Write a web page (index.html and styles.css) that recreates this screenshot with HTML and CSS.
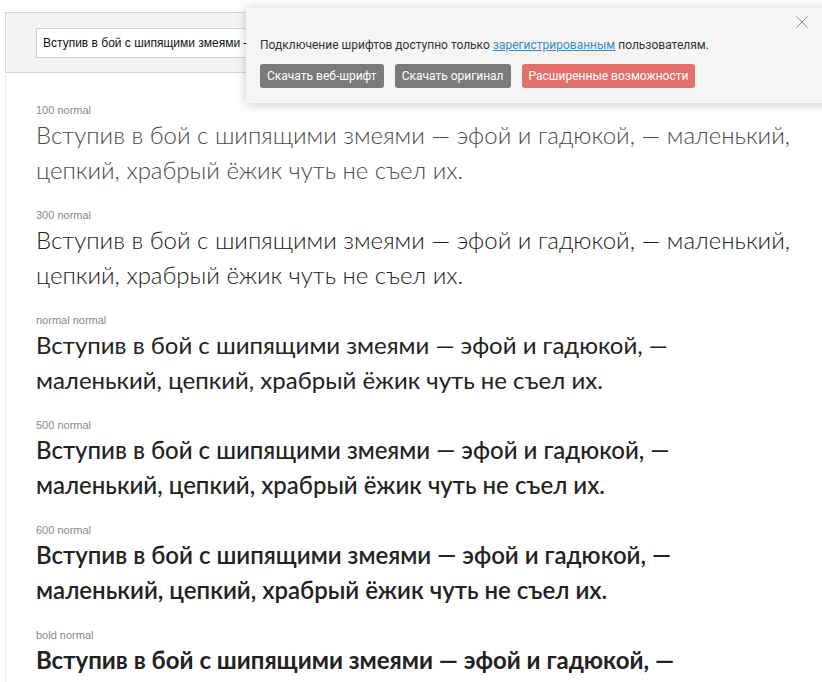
FILE: index.html
```html
<!DOCTYPE html>
<html lang="ru">
<head>
<meta charset="utf-8">
<title>Шрифт</title>
<link rel="stylesheet" href="styles.css">
</head>
<body>
<div class="page">
  <div class="toolbar">
    <div class="sample-input">Вступив в бой с шипящими змеями — эфой и гадюкой, — маленький, цепкий</div>
  </div>
  <div class="content">
    <section class="style">
      <div class="label">100 normal</div>
      <p class="sample w100">Вступив в бой с шипящими змеями — эфой и гадюкой, — маленький, цепкий, храбрый ёжик чуть не съел их.</p>
    </section>
    <section class="style">
      <div class="label">300 normal</div>
      <p class="sample w300">Вступив в бой с шипящими змеями — эфой и гадюкой, — маленький, цепкий, храбрый ёжик чуть не съел их.</p>
    </section>
    <section class="style">
      <div class="label">normal normal</div>
      <p class="sample w400">Вступив в бой с шипящими змеями — эфой и гадюкой, — маленький, цепкий, храбрый ёжик чуть не съел их.</p>
    </section>
    <section class="style">
      <div class="label">500 normal</div>
      <p class="sample w500">Вступив в бой с шипящими змеями — эфой и гадюкой, — маленький, цепкий, храбрый ёжик чуть не съел их.</p>
    </section>
    <section class="style">
      <div class="label">600 normal</div>
      <p class="sample w600">Вступив в бой с шипящими змеями — эфой и гадюкой, — маленький, цепкий, храбрый ёжик чуть не съел их.</p>
    </section>
    <section class="style">
      <div class="label">bold normal</div>
      <p class="sample w700">Вступив в бой с шипящими змеями — эфой и гадюкой, — маленький, цепкий, храбрый ёжик чуть не съел их.</p>
    </section>
  </div>
</div>
<div class="popup">
  <button class="close" aria-label="Закрыть">
    <svg width="12" height="12" viewBox="0 0 12 12"><path d="M0.5 0.5 L11.5 11.5 M11.5 0.5 L0.5 11.5" stroke="#8a8a8a" stroke-width="1" fill="none"/></svg>
  </button>
  <p class="popup-text">Подключение шрифтов доступно только <a href="#">зарегистрированным</a> пользователям.</p>
  <div class="popup-actions">
    <button class="btn btn-grey">Скачать веб-шрифт</button>
    <button class="btn btn-grey">Скачать оригинал</button>
    <button class="btn btn-red">Расширенные возможности</button>
  </div>
</div>
</body>
</html>
```
FILE: styles.css
```css
html, body {
  margin: 0;
  padding: 0;
  background: #fff;
}
body {
  font-family: "Liberation Sans", Arial, sans-serif;
  color: #222;
  overflow: hidden;
  height: 682px;
}
.page {
  padding: 12px 0 0 5px;
}
.toolbar {
  background: #f4f4f4;
  border: 1px solid #d6d6d6;
  border-right: none;
  padding: 15px 0 0 30px;
  box-sizing: border-box;
  height: 61px;
}
.sample-input {
  width: 360px;
  height: 30px;
  box-sizing: border-box;
  background: #fff;
  border: 1px solid #cfcfcf;
  font-size: 12px;
  line-height: 28px;
  padding: 0 6px;
  white-space: nowrap;
  overflow: hidden;
  color: #111;
}
.content {
  border-left: 1px solid #ececec;
  padding: 30px 22px 0 30px;
}
.style {
  margin-bottom: 21px;
}
.label {
  font-family: "Liberation Sans", Arial, sans-serif;
  font-size: 11px;
  line-height: 14px;
  color: #8a8a8a;
}
.sample {
  margin: 0;
  font-family: Lato, "Open Sans", sans-serif;
  font-size: 24px;
  line-height: 35px;
  color: #222;
}
.w100 { font-weight: 300; color: #4a4a4a; }
.w300 { font-weight: 300; }
.w400 { font-weight: 400; }
.w500 { font-weight: 500; }
.w600 { font-weight: 600; }
.w700 { font-weight: 700; }

.popup {
  position: absolute;
  top: 8px;
  left: 246px;
  width: 590px;
  height: 95px;
  box-sizing: border-box;
  background: #f5f5f5;
  box-shadow: 0 1px 10px rgba(0, 0, 0, 0.22);
  padding: 30px 0 0 14px;
  font-family: Roboto, "Liberation Sans", Arial, sans-serif;
}
.close {
  position: absolute;
  top: 7px;
  left: 549px;
  width: 14px;
  height: 14px;
  padding: 0;
  border: none;
  background: none;
  display: flex;
  align-items: center;
  justify-content: center;
}
.popup-text {
  margin: 0;
  font-size: 12px;
  line-height: 15px;
  color: #333;
}
.popup-text a {
  color: #3d8ac9;
  text-decoration: underline;
}
.popup-actions {
  display: flex;
  gap: 11px;
  margin-top: 11px;
}
.btn {
  height: 24px;
  border: none;
  border-radius: 3px;
  color: #fff;
  font-family: Roboto, "Liberation Sans", Arial, sans-serif;
  font-size: 12px;
  padding: 0 7px;
  line-height: 24px;
}
.btn-grey {
  background: #7a7a7a;
}
.btn-red {
  background: #e2706a;
}
```
